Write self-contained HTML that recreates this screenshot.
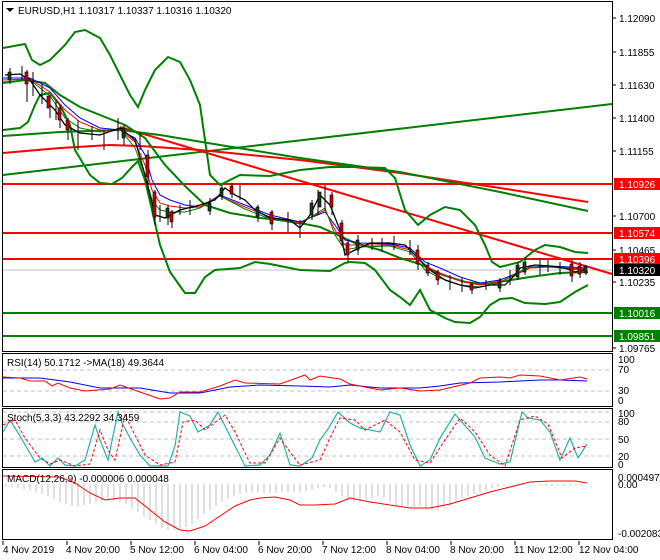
<!DOCTYPE html>
<html><head><meta charset="utf-8"><style>
body{margin:0;background:#fff;width:660px;height:560px;overflow:hidden}
svg{display:block;font-family:"Liberation Sans",sans-serif;font-size:10px}
</style></head><body>
<svg width="660" height="560" viewBox="0 0 660 560">
<rect width="660" height="560" fill="#fff"/>
<g fill="none" stroke="#000" stroke-width="1">
<rect x="2.5" y="1.5" width="610" height="350"/>
<rect x="2.5" y="353.5" width="610" height="53"/>
<rect x="2.5" y="408.5" width="610" height="59"/>
<rect x="2.5" y="469.5" width="610" height="70"/>
</g>
<line x1="3" y1="270" x2="612" y2="270" stroke="#c0c0c0"/>
<g stroke="#ff0000" stroke-width="2">
<line x1="3" y1="184" x2="612" y2="184"/>
<line x1="3" y1="233" x2="612" y2="233"/>
<line x1="3" y1="259" x2="612" y2="259"/>
</g>
<g stroke="#008000" stroke-width="2">
<line x1="3" y1="313" x2="612" y2="313"/>
<line x1="3" y1="336" x2="612" y2="336"/>
<line x1="3" y1="175" x2="612" y2="104"/>
</g>
<line x1="120" y1="127" x2="612" y2="274" stroke="#ff0000" stroke-width="2"/>
<polyline fill="none" stroke="#ff0000" stroke-width="2" points="3,153 60,148 110,145 140,146 200,150 300,160 400,173 500,188 588,202"/>
<polyline fill="none" stroke="#008000" stroke-width="2" points="3,136 60,132 120,130 160,135 220,145 300,158 400,172 500,192 588,211"/>
<g fill="none" stroke="#008000" stroke-width="2">
<polyline points="3,48 25,44 32,60 40,65 50,60 65,45 75,32 85,30 100,38 110,55 120,75 130,95 138,107 145,90 155,70 168,57 180,62 190,80 200,105 205,140 210,175 220,185 240,175 270,176 300,170 330,167 355,167 385,168 395,178 405,210 418,225 430,215 445,207 460,210 475,225 485,245 492,262 500,267 520,262 535,250 545,245 560,247 575,252 588,253"/>
<polyline points="3,130 20,128 28,122 35,105 40,95 50,93 60,105 70,125 75,150 90,175 100,183 112,184 122,178 132,167 138,161 145,180 152,210 160,245 170,272 185,293 195,293 205,277 215,270 240,268 255,262 270,264 300,270 330,271 345,263 350,262 365,263 375,270 390,290 400,297 410,305 420,290 430,310 445,318 455,322 470,323 480,317 490,305 500,299 512,298 525,303 545,304 560,302 575,292 588,285"/>
<polyline points="3,83 25,80 45,83 60,95 80,107 100,115 125,125 145,138 165,165 185,186 205,205 230,213 260,218 290,221 320,227 340,236 355,243 380,250 400,258 420,264 440,274 465,282 485,284 505,281 530,277 560,273 588,272"/>
</g>
<polyline fill="none" stroke="#0000ff" points="3,78 30,78 50,88 65,105 80,118 100,128 120,130 135,138 145,155 152,180 160,195 170,200 185,205 200,207 220,195 245,205 270,215 300,222 325,212 335,225 345,240 360,243 390,244 410,248 425,262 440,268 460,277 480,283 500,280 515,274 530,267 550,266 570,267 585,268"/>
<polyline fill="none" stroke="#ff0000" points="3,80 30,79 50,92 65,110 80,122 100,130 120,130 135,142 145,165 152,190 160,203 170,206 185,208 200,207 220,196 245,207 270,217 300,223 325,210 335,230 345,245 360,245 390,245 410,250 425,266 440,273 460,281 480,285 500,282 515,275 530,268 550,267 570,268 585,269"/>
<polyline fill="none" stroke="#008000" points="3,82 30,80 50,96 65,118 80,128 100,132 120,129 135,148 145,175 152,200 160,210 170,212 185,212 200,208 220,196 245,209 270,219 300,224 325,208 335,235 345,250 360,247 390,246 410,252 425,270 440,278 460,285 480,287 500,283 515,274 530,267 550,267 570,269 585,270"/>
<polyline fill="none" stroke="#000" stroke-width="1.3" points="5,75 20,74 30,80 40,95 55,110 65,125 80,133 100,135 120,128 135,140 145,175 155,215 165,218 180,210 200,205 215,200 225,188 235,195 245,200 255,210 270,218 290,220 300,228 310,215 320,195 330,205 340,230 345,255 355,250 370,243 390,243 405,245 420,260 430,270 445,280 460,285 475,288 490,285 505,285 515,275 520,268 535,265 550,266 565,268 575,272 585,270"/>
<g stroke="#000">
<path d="M10,68V84M22,66V80M27,70V102M33,72V96M42,84V104M50,95V118M56,100V120M60,105V128M68,118V140M78,120V150M92,126V140M104,130V150M118,118V140M124,125V145M140,132V150M148,150V190M155,190V225M160,205V222M168,205V225M172,210V228M180,205V215M190,200V215M210,198V215M222,185V200M232,183V198M240,185V200M258,205V222M272,210V230M288,212V232M300,220V238M312,200V220M318,190V215M325,185V210M332,192V215M342,220V245M348,240V262M358,235V255M372,238V250M382,238V252M394,236V250M410,240V255M418,245V270M428,262V276M438,270V285M450,275V290M462,278V292M472,283V294M486,280V290M500,278V292M510,270V285M518,262V280M525,258V275M540,258V275M548,260V272M560,262V275M572,260V282M580,262V278M586,265V275"/>
</g>
<g fill="#cc0000" stroke="#000" stroke-width=".6">
<rect x="25" y="72" width="3" height="12"/><rect x="47" y="96" width="3" height="12"/><rect x="58" y="108" width="3" height="12"/><rect x="66" y="120" width="3" height="10"/><rect x="146" y="155" width="3" height="22"/><rect x="153" y="192" width="3" height="25"/><rect x="170" y="212" width="3" height="10"/><rect x="230" y="186" width="3" height="8"/><rect x="270" y="212" width="3" height="12"/><rect x="330" y="195" width="3" height="12"/><rect x="340" y="223" width="3" height="18"/><rect x="346" y="243" width="3" height="12"/><rect x="416" y="250" width="3" height="14"/><rect x="426" y="265" width="3" height="8"/><rect x="436" y="272" width="3" height="8"/><rect x="470" y="284" width="3" height="6"/><rect x="570" y="264" width="3" height="12"/><rect x="578" y="266" width="3" height="8"/>
</g>
<g fill="#1a3a1a" stroke="#000" stroke-width=".6">
<rect x="8" y="72" width="3" height="8"/><rect x="122" y="128" width="3" height="10"/><rect x="166" y="208" width="3" height="10"/><rect x="208" y="203" width="3" height="8"/><rect x="220" y="188" width="3" height="8"/><rect x="256" y="207" width="3" height="10"/><rect x="310" y="203" width="3" height="12"/><rect x="318" y="192" width="3" height="15"/><rect x="356" y="240" width="3" height="10"/><rect x="498" y="280" width="3" height="8"/><rect x="516" y="265" width="3" height="12"/><rect x="523" y="262" width="3" height="10"/><rect x="584" y="266" width="3" height="7"/>
</g>
<g stroke="#c0c0c0" stroke-dasharray="4,3">
<line x1="3" y1="370" x2="612" y2="370"/><line x1="3" y1="391" x2="612" y2="391"/>
<line x1="3" y1="412" x2="612" y2="412"/><line x1="3" y1="422" x2="612" y2="422"/><line x1="3" y1="439" x2="612" y2="439"/><line x1="3" y1="456" x2="612" y2="456"/>
</g>
<polyline fill="none" stroke="#0000ff" points="3,378 40,378 70,382 100,388 140,388 170,393 200,393 230,387 260,385 300,386 330,387 350,385 380,388 420,388 440,386 460,383 500,382 540,380 560,380 587,381"/>
<polyline fill="none" stroke="#ff0000" points="3,377 20,378 30,381 45,381 52,386 58,383 70,388 85,391 110,389 120,385 140,392 160,399 170,398 180,392 200,392 220,386 235,380 245,383 280,384 305,375 310,380 320,376 340,379 350,384 380,390 400,388 420,391 440,390 470,383 480,378 500,377 510,378 520,375 540,376 560,380 580,377 587,379"/>
<polyline fill="none" stroke="#20b2aa" stroke-width="1.2" points="3,432 10,420 20,436 35,462 42,458 50,466 58,458 65,465 75,466 85,460 95,425 100,440 108,460 118,412 122,423 130,438 140,455 150,466 168,466 175,446 180,412 190,416 198,432 210,425 218,412 230,436 245,466 260,465 270,455 280,433 290,465 300,466 312,458 320,440 328,429 338,412 350,423 360,428 380,432 390,412 400,415 410,445 420,466 430,460 440,438 455,414 460,420 475,437 485,458 500,464 510,462 522,412 528,418 540,420 550,432 560,460 570,438 578,458 587,444"/>
<polyline fill="none" stroke="#ff0000" stroke-dasharray="3,2" points="3,425 15,420 25,438 40,458 50,464 60,460 75,466 90,464 100,430 108,450 115,460 125,415 135,435 145,455 160,465 175,462 183,422 195,420 205,430 225,415 235,432 250,463 265,463 280,438 290,452 300,465 320,460 330,438 340,418 355,420 365,430 385,420 400,432 415,460 430,463 445,440 460,418 475,432 490,455 505,466 520,420 535,416 548,424 562,458 575,448 587,446"/>
<g stroke="#c0c0c0">
<path d="M6,484v3M12,484v3M18,484v4M24,484v5M30,484v6M36,484v8M42,484v10M48,484v12M54,484v15M60,484v18M66,484v20M72,484v22M78,484v22M84,484v21M90,484v20M96,484v18M102,484v17M108,484v16M114,484v17M120,484v18M126,484v20M132,484v24M138,484v28M144,484v32M150,484v36M156,484v40M162,484v44M168,484v46M174,484v46M180,484v45M186,484v43M192,484v40M198,484v35M204,484v30M210,484v26M216,484v22M222,484v18M228,484v15M234,484v12M240,484v10M246,484v8M252,484v8M258,484v8M264,484v9M270,484v9M276,484v9M282,484v8M288,484v8M294,484v8M300,484v8M306,484v7M312,484v6M318,484v4M324,484v3M330,484v4M336,484v8M342,484v12M348,484v16M354,484v18M360,484v18M366,484v16M372,484v14M378,484v12M384,484v14M390,484v18M396,484v22M402,484v22M408,484v22M414,484v22M420,484v22M426,484v24M432,484v26M438,484v26M444,484v24M450,484v22M456,484v18M462,484v14M468,484v12M474,484v10M480,484v8M486,484v6M492,484v4M498,484v3M504,484v2M540,484v2M546,484v2M552,484v2M558,484v2M564,484v2M570,484v2M576,484v2M582,484v2"/>
</g>
<polyline fill="none" stroke="#ff0000" points="3,476 60,477 75,483 90,493 105,500 120,498 135,498 150,510 165,522 180,530 190,531 205,526 220,516 235,506 250,500 260,498 275,497 290,500 300,505 315,505 335,504 350,498 370,502 390,505 410,508 430,508 450,504 470,498 490,492 510,487 530,482 550,481 575,481 587,483"/>
<g stroke="#000"><path d="M613,18h3M613,52h3M613,85h3M613,118h3M613,151h3M613,216h3M613,250h3M613,282h3M613,348h3"/></g>
<g fill="#000">
<text x="619" y="22">1.12090</text><text x="619" y="56">1.11855</text><text x="619" y="89">1.11630</text><text x="619" y="122">1.11400</text><text x="619" y="155">1.11155</text><text x="619" y="220">1.10700</text><text x="619" y="254">1.10465</text><text x="619" y="286">1.10235</text><text x="619" y="352">1.09765</text>
<text x="618" y="363">100</text><text x="618" y="373">70</text><text x="618" y="394">30</text><text x="618" y="404">0</text>
<text x="618" y="417">100</text><text x="618" y="425">80</text><text x="618" y="443">50</text><text x="618" y="460">20</text><text x="618" y="468">0</text>
<text x="618" y="481">0.000497</text><text x="618" y="488">0.00</text><text x="618" y="537">-0.002083</text>
</g>
<rect x="614" y="178" width="46" height="12" fill="#ff0000"/><text x="619" y="188" fill="#fff">1.10926</text>
<rect x="614" y="227" width="46" height="12" fill="#ff0000"/><text x="619" y="237" fill="#fff">1.10574</text>
<rect x="614" y="253" width="46" height="12" fill="#ff0000"/><text x="619" y="263" fill="#fff">1.10396</text>
<rect x="614" y="264" width="46" height="12" fill="#000"/><text x="619" y="274" fill="#fff">1.10320</text>
<rect x="614" y="307" width="46" height="12" fill="#008000"/><text x="619" y="317" fill="#fff">1.10016</text>
<rect x="614" y="330" width="46" height="12" fill="#008000"/><text x="619" y="340" fill="#fff">1.09851</text>
<path d="M6,8h8l-4,4z" fill="#000"/>
<text x="18" y="14" fill="#000">EURUSD,H1  1.10317 1.10337 1.10316 1.10320</text>
<text x="7" y="366" fill="#000">RSI(14) 50.1712  -&gt;MA(18) 49.3644</text>
<text x="7" y="421" fill="#000">Stoch(5,3,3) 43.2292 34.3459</text>
<text x="7" y="482" fill="#000">MACD(12,26,9) -0.000006 0.000048</text>
<g stroke="#000"><path d="M3,541v4M67,541v4M131,541v4M195,541v4M259,541v4M323,541v4M387,541v4M451,541v4M515,541v4M579,541v4"/></g>
<g fill="#000">
<text x="3" y="553">4 Nov 2019</text><text x="66" y="553">4 Nov 20:00</text><text x="130" y="553">5 Nov 12:00</text><text x="194" y="553">6 Nov 04:00</text><text x="258" y="553">6 Nov 20:00</text><text x="322" y="553">7 Nov 12:00</text><text x="386" y="553">8 Nov 04:00</text><text x="450" y="553">8 Nov 20:00</text><text x="514" y="553">11 Nov 12:00</text><text x="579" y="553">12 Nov 04:00</text>
</g>
</svg>
</body></html>
